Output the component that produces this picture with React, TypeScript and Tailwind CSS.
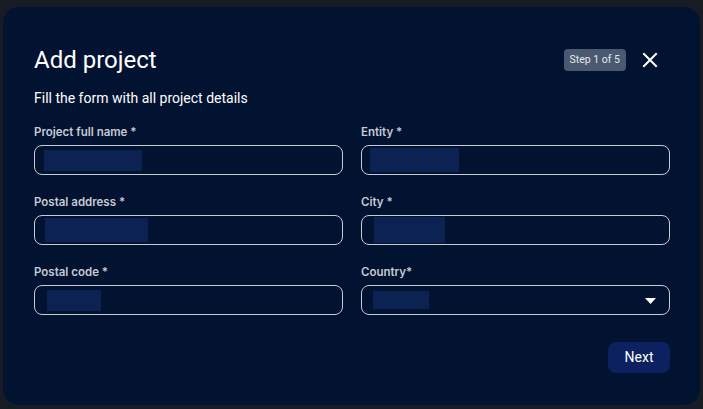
import React from "react";

function Field({ label, block, select }: { label: string; block: [number, number, number]; select?: boolean }) {
  const [left, width, height] = block;
  return (
    <div className="flex flex-col">
      <div className="h-[16px] text-[11.5px] leading-[16px] font-semibold text-[#c6cad2]" style={{ fontFamily: "Inter, sans-serif" }}>
        {label}
      </div>
      <div className="mt-[5px] h-[30px] rounded-[8px] border border-[#c8ccd4] flex items-center relative">
        <div className="bg-[#0c2252]" style={{ marginLeft: left, width, height }} />
        {select && (
          <svg className="absolute right-[13px] top-[12px]" width="11" height="6" viewBox="0 0 11 6">
            <path d="M0 0 L11 0 L5.5 6 Z" fill="#ffffff" />
          </svg>
        )}
      </div>
    </div>
  );
}

export default function App() {
  return (
    <div className="w-[703px] h-[409px] bg-[#161b24] pt-[7px] pl-[3px] pr-[3px] pb-[4px] flex" style={{ fontFamily: "Roboto, sans-serif" }}>
      <div className="flex-1 bg-[#021231] rounded-[16px] pt-[37px] pl-[31px] pr-[30px] flex flex-col">
        <div className="flex items-center h-[32px]">
          <div className="text-[24px] leading-[32px] text-white">Add project</div>
          <div className="ml-auto h-[22px] px-[6px] rounded-[4px] bg-[#4a5870] text-[10.5px] text-[#e6e8ec] flex items-center">Step 1 of 5</div>
          <svg className="ml-[16px] mr-[12px]" width="16" height="16" viewBox="0 0 16 16">
            <path d="M2 2 L14 14 M14 2 L2 14" stroke="#ffffff" strokeWidth="2" strokeLinecap="square" />
          </svg>
        </div>
        <div className="mt-[12px] text-[14px] leading-[20px] text-white">Fill the form with all project details</div>
        <div className="mt-[16px] grid grid-cols-2 gap-x-[18px] gap-y-[19px]">
          <Field label="Project full name *" block={[9, 98, 21]} />
          <Field label="Entity *" block={[8, 89, 24]} />
          <Field label="Postal address *" block={[10, 103, 24]} />
          <Field label="City *" block={[12, 71, 26]} />
          <Field label="Postal code *" block={[12, 54, 21]} />
          <Field label="Country*" block={[11, 56, 18]} select />
        </div>
        <div className="mt-[27px] flex justify-end">
          <button className="h-[31px] w-[62px] rounded-[8px] bg-[#0b2160] text-white text-[14px]">Next</button>
        </div>
      </div>
    </div>
  );
}
